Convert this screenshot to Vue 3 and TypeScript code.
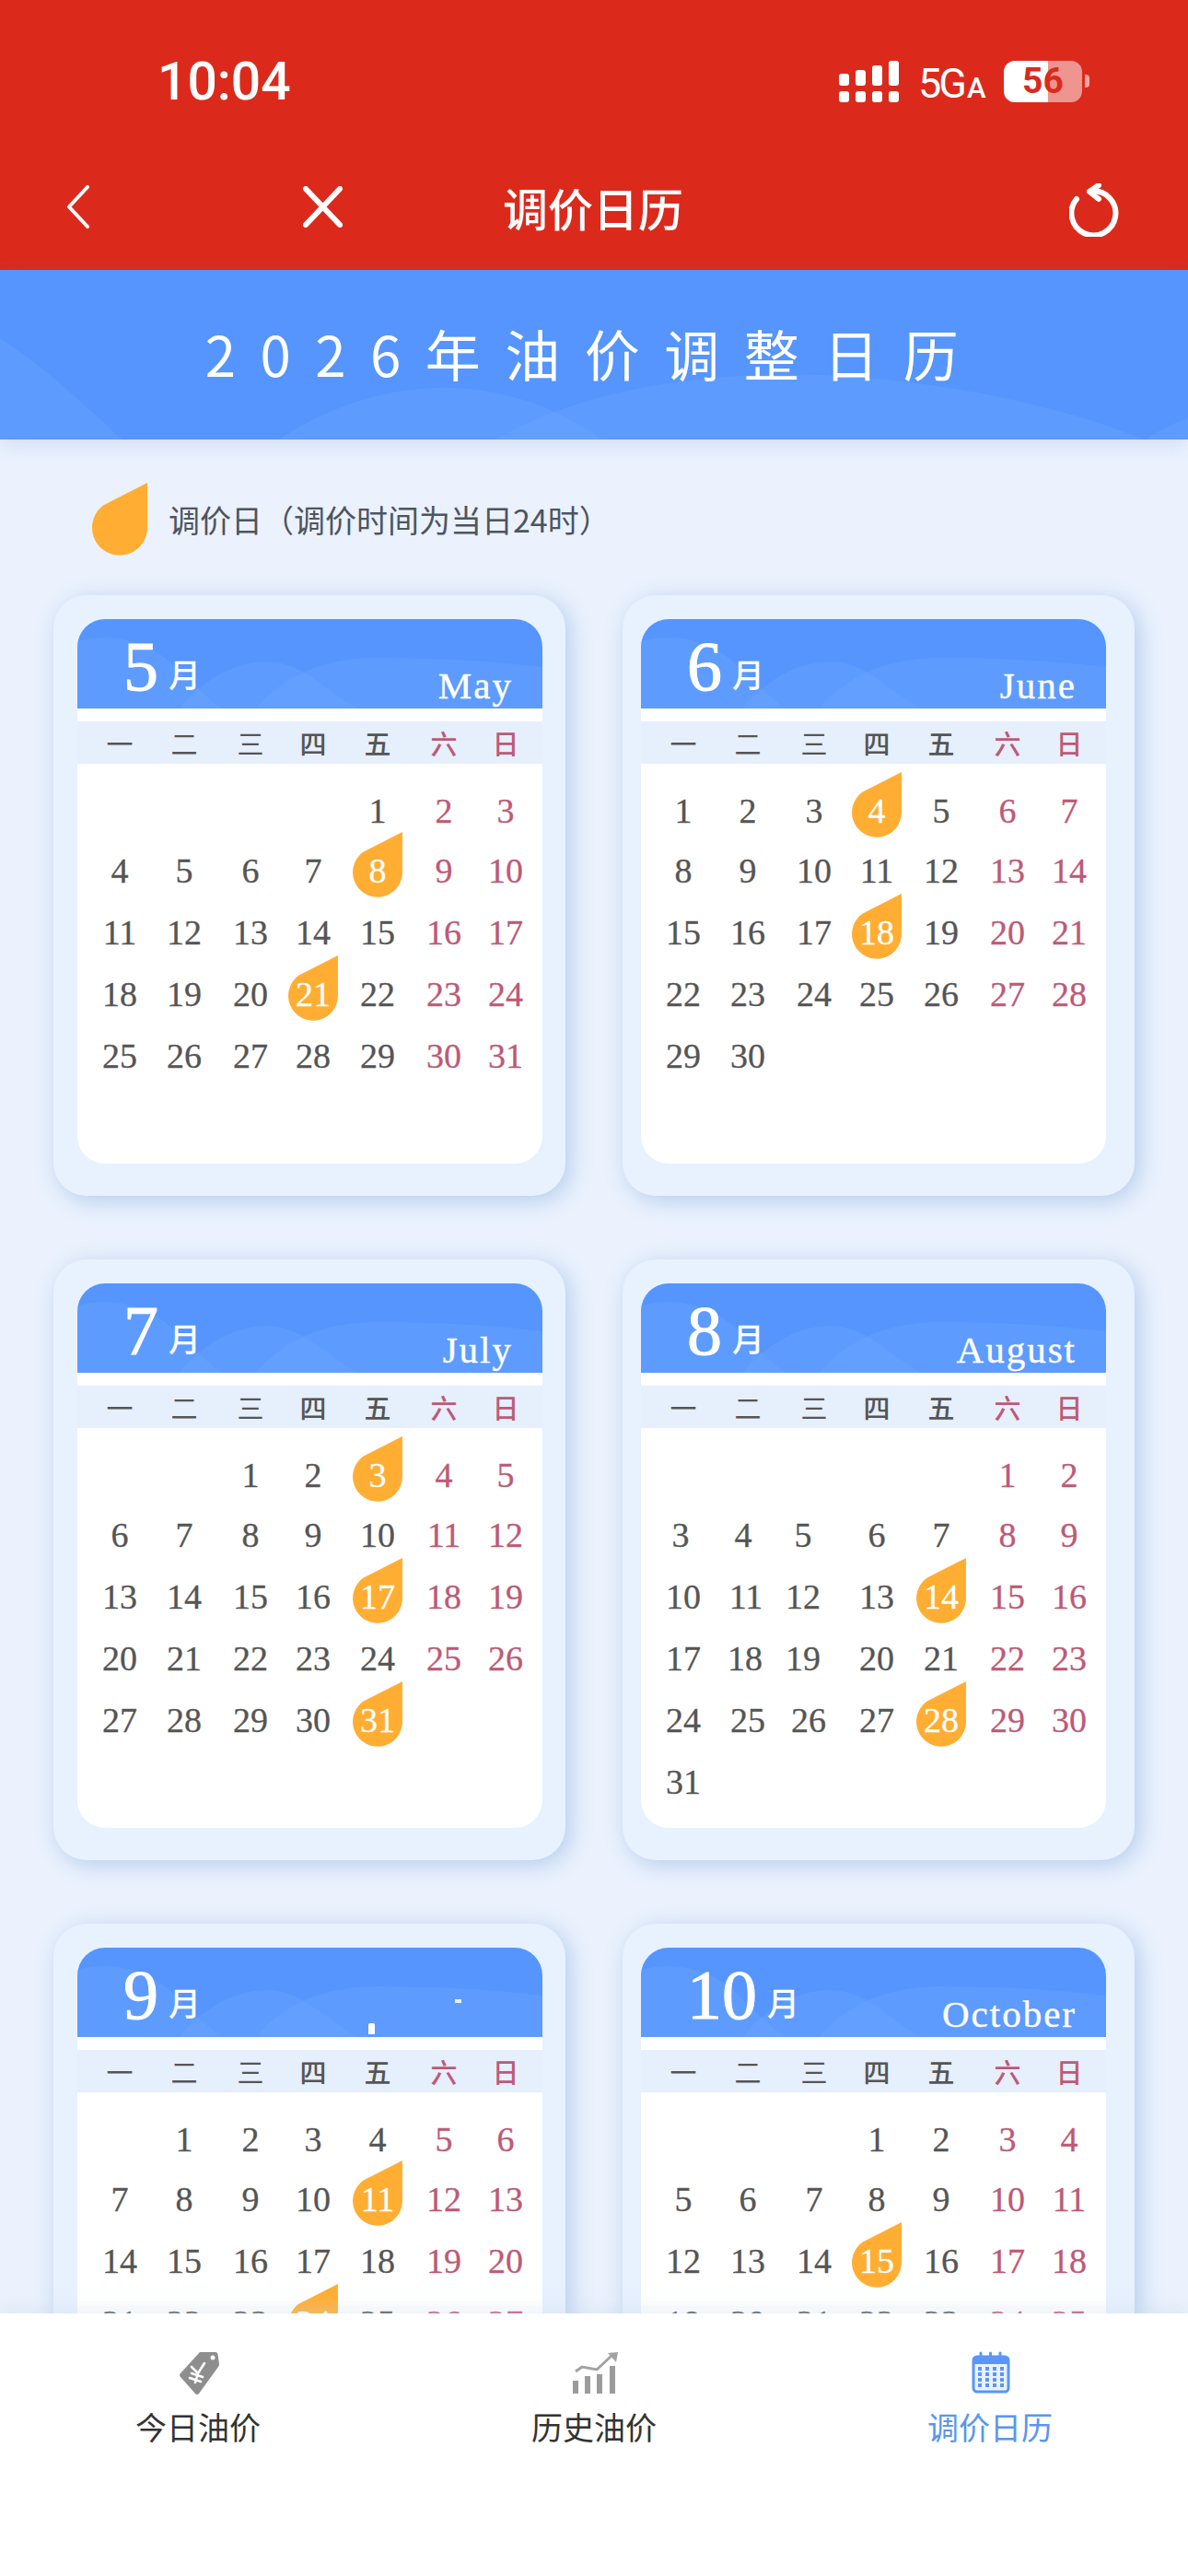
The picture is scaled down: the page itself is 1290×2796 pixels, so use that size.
<script setup lang="ts">
interface Month {
  num: number
  en: string
  first: number
  days: number
  marks: number[]
  ghost?: boolean
  nudge?: Record<number, number>
}

const months: Month[] = [
  { num: 5, en: 'May', first: 4, days: 31, marks: [8, 21] },
  { num: 6, en: 'June', first: 0, days: 30, marks: [4, 18] },
  { num: 7, en: 'July', first: 2, days: 31, marks: [3, 17, 31] },
  { num: 8, en: 'August', first: 5, days: 31, marks: [14, 28], nudge: { 3: -3, 4: -5, 5: -12, 11: -2, 12: -12, 18: -3, 19: -12, 26: -6 } },
  { num: 9, en: '', first: 1, days: 30, marks: [11, 24], ghost: true },
  { num: 10, en: 'October', first: 3, days: 31, marks: [15, 29] }
]

const week = ['一', '二', '三', '四', '五', '六', '日']

function cells(m: Month): (number | null)[] {
  const out: (number | null)[] = Array(m.first).fill(null)
  for (let d = 1; d <= m.days; d++) out.push(d)
  return out
}

function shift(m: Month, d: number | null) {
  const dx = d !== null ? m.nudge?.[d] : undefined
  return dx ? { left: `${dx}px` } : undefined
}
</script>

<template>
  <div class="app">
    <header class="top">
      <div class="status">
        <span class="time">10:04</span>
        <div class="status-right">
          <svg class="signal" width="65" height="45" viewBox="0 0 65 45" fill="#fff">
            <rect x="0" y="14" width="11" height="13" rx="3" />
            <rect x="18" y="10" width="11" height="17" rx="3" />
            <rect x="36" y="5" width="11" height="22" rx="3" />
            <rect x="54" y="0" width="11" height="27" rx="3" />
            <rect x="0" y="33" width="11" height="12" rx="3" />
            <rect x="18" y="33" width="11" height="12" rx="3" />
            <rect x="36" y="33" width="11" height="12" rx="3" />
            <rect x="54" y="33" width="11" height="12" rx="3" />
          </svg>
          <span class="net">5G<small>A</small></span>
          <div class="battery"><span>56</span></div>
          <i class="nub"></i>
        </div>
      </div>
      <nav class="nav">
        <div class="nav-left">
          <svg width="25" height="47" viewBox="0 0 25 47" fill="none" stroke="#fff" stroke-width="4" stroke-linecap="round" stroke-linejoin="round">
            <path d="M23 2 L3 23.5 L23 45" />
          </svg>
          <svg width="43" height="45" viewBox="0 0 43 45" fill="none" stroke="#fff" stroke-width="6" stroke-linecap="round">
            <path d="M3 3 L40 42 M40 3 L3 42" />
          </svg>
        </div>
        <div class="nav-title">调价日历</div>
        <div class="nav-right">
          <svg width="55" height="58" viewBox="0 0 55 58" fill="none" stroke="#fff" stroke-width="6" stroke-linecap="round" stroke-linejoin="round">
            <path d="M24 8.500 A24 24 0 1 1 8 17" />
            <path d="M32 2 L22 9 L32 17" />
          </svg>
        </div>
      </nav>
    </header>

    <section class="banner">
      <svg class="banner-waves" viewBox="0 0 1290 183" preserveAspectRatio="none">
        <path d="M0 74 C50 105 95 150 133 183 L0 183 Z" />
        <path d="M303 183 C360 145 425 126 485 127 C550 128 610 150 652 183 Z" />
        <path d="M538 183 C620 135 740 112 863 113 C1000 114 1150 145 1242 183 Z" />
        <path d="M1245 183 C1260 172 1275 165 1290 160 L1290 183 Z" />
      </svg>
      <h1 class="banner-title">2026年油价调整日历</h1>
    </section>

    <main class="main">
      <div class="legend">
        <svg class="legend-drop" viewBox="0 0 60 79">
          <path d="M60 0 V49 A30 30 0 1 1 13 24 Z" />
        </svg>
        <span>调价日（调价时间为当日24时）</span>
      </div>

      <div class="cards">
        <article v-for="m in months" :key="m.num" class="card">
          <div class="sheet">
            <div class="head">
              <svg class="head-waves" viewBox="0 0 506 97" preserveAspectRatio="none">
                <path d="M0 24 C35 14 75 22 105 50 C120 66 135 80 157 97 L0 97 Z" />
                <path d="M110 97 C140 62 175 46 205 46 C245 46 265 75 305 97 Z" />
                <path d="M194 97 C225 60 270 42 325 42 C385 42 450 45 506 52 L506 97 Z" />
              </svg>
              <div class="mon">{{ m.num }}<span class="mon-cn">月</span></div>
              <div class="mon-en">{{ m.en }}</div>
              <template v-if="m.ghost">
                <i class="ghost-a"></i>
                <i class="ghost-b"></i>
              </template>
            </div>
            <div class="week">
              <span v-for="(w, i) in week" :key="w" :class="{ off: i > 4, strong: i === 3 || i === 4 }">{{ w }}</span>
            </div>
            <div class="days">
              <span
                v-for="(d, i) in cells(m)"
                :key="i"
                class="day"
                :class="{ off: i % 7 > 4, hot: d !== null && m.marks.includes(d) }"
              >
                <svg v-if="d !== null && m.marks.includes(d)" class="drop" viewBox="0 0 60 79">
                  <path d="M60 0 V49 A30 30 0 1 1 13 24 Z" />
                </svg>
                <b :style="shift(m, d)">{{ d ?? '' }}</b>
              </span>
            </div>
          </div>
        </article>
      </div>
    </main>

    <footer class="tabs">
      <div class="tab">
        <svg class="tab-icon" width="70" height="48" viewBox="0 13 70 48">
          <path d="M37 14 H54 Q56 14 56.500 16 L58 27 Q58 29 57 30 L36 59 Q34 61 32 59 L16 41 Q14 39 16 37 Z" fill="#8e8e8e" />
          <circle cx="51" cy="20" r="2.500" fill="#fff" />
          <path d="M28 30 L35 37 L42 26 M35 37 L32 47 M28 37 L40 41 M26 42 L38 46" fill="none" stroke="#fff" stroke-width="2.600" stroke-linecap="round" />
        </svg>
        <span>今日油价</span>
      </div>
      <div class="tab">
        <svg class="tab-icon" width="70" height="48" viewBox="0 13 70 48">
          <g fill="#9b9b9b">
            <rect x="12" y="45" width="6" height="14" />
            <rect x="25" y="40" width="6" height="19" />
            <rect x="38" y="38" width="6" height="21" />
            <rect x="52" y="29" width="6" height="30" />
          </g>
          <path d="M15 35 L22 30 L38 33 L54 18" fill="none" stroke="#a3a3a3" stroke-width="3" />
          <path d="M50 15 L61 14 L59 25 Z" fill="#a3a3a3" />
        </svg>
        <span>历史油价</span>
      </div>
      <div class="tab active">
        <svg class="tab-icon" width="70" height="48" viewBox="0 13 70 48">
          <rect x="17" y="19" width="38" height="38" rx="4" fill="#e9f1ff" stroke="#5a96f4" stroke-width="3" />
          <rect x="17" y="19" width="38" height="8" fill="#5a96f4" />
          <g fill="none" stroke="#5a96f4" stroke-width="3" stroke-linecap="round">
            <path d="M25 15 V23 M35.500 15 V23 M46 15 V23" />
          </g>
          <g fill="#5a96f4">
            <template v-for="y in [30, 36, 42, 48]" :key="y">
              <rect v-for="x in [22, 30, 38, 46]" :key="x" :x="x" :y="y" width="4" height="4" />
            </template>
          </g>
        </svg>
        <span>调价日历</span>
      </div>
    </footer>
  </div>
</template>

<style>
html,
body {
  margin: 0;
  background: #ebf2fd;
}
</style>

<style scoped>
.app {
  width: 1290px;
  height: 2796px;
  display: flex;
  flex-direction: column;
  overflow: hidden;
  background: #ebf2fd;
  font-family: 'Noto Sans CJK SC', 'Noto Sans', sans-serif;
}

.top {
  height: 293px;
  flex: none;
  background: #db2a1c;
  color: #fff;
}

.status {
  height: 176px;
  display: flex;
  align-items: center;
  justify-content: space-between;
  padding: 0 107px 0 171px;
}

.time {
  font: 500 57px/1 Roboto, sans-serif;
}

.status-right {
  display: flex;
  align-items: center;
}

.signal {
  display: block;
  margin-right: 21px;
}

.net {
  font: 400 45px/1 Roboto, sans-serif;
  letter-spacing: -3px;
  width: 93px;
  margin-top: 4px;
}

.net small {
  font-size: 31px;
  font-weight: 500;
  margin-left: 3px;
  letter-spacing: 0;
}

.battery {
  width: 85px;
  height: 45px;
  border-radius: 12px;
  background: linear-gradient(to right, #fff 56.500%, rgba(255, 255, 255, 0.5) 56.500%);
  display: flex;
  align-items: center;
  justify-content: center;
  color: #db2a1c;
  font: 700 39px/1 Roboto, sans-serif;
}

.nub {
  width: 5px;
  height: 14px;
  margin-left: 3px;
  border-radius: 0 4px 4px 0;
  background: rgba(255, 255, 255, 0.6);
}

.nav {
  height: 96px;
  display: grid;
  grid-template-columns: 1fr auto 1fr;
  align-items: center;
  padding: 0 74px 0 72px;
}

.nav-left {
  display: flex;
  align-items: center;
  gap: 232px;
}

.nav-title {
  font-size: 49px;
  font-weight: 500;
  line-height: 1;
}

.nav-right {
  display: flex;
  justify-content: flex-end;
  padding-top: 8px;
}

.banner {
  height: 184px;
  flex: none;
  position: relative;
  background: #5595fd;
  box-shadow: 0 6px 22px rgba(80, 120, 200, 0.16);
  display: flex;
  align-items: center;
  justify-content: center;
  padding-bottom: 5px;
  box-sizing: border-box;
  z-index: 1;
}

.banner-waves {
  position: absolute;
  inset: 0;
  width: 100%;
  height: 100%;
}

.banner-waves path {
  fill: #6ba6ff;
  opacity: 0.38;
}

.banner-title {
  position: relative;
  margin: 0;
  color: #fff;
  font-size: 60px;
  font-weight: 400;
  letter-spacing: 26.500px;
  line-height: 1;
}

.main {
  flex: 1;
  min-height: 0;
  overflow: hidden;
  padding: 47px 0 0 58px;
}

.legend {
  display: flex;
  align-items: center;
  gap: 23px;
  padding-left: 42px;
  height: 79px;
  margin-bottom: 43px;
  color: #4d5560;
  font-size: 34px;
}

.legend-drop {
  width: 60px;
  height: 79px;
  flex: none;
}

.legend-drop path,
.drop path {
  fill: #ffae33;
}

.cards {
  display: grid;
  grid-template-columns: 556px 556px;
  column-gap: 62px;
  row-gap: 69px;
}

.card {
  height: 652px;
  box-sizing: border-box;
  padding: 26px 25px 35px 26px;
  border-radius: 36px;
  background: #e8f1fe;
  box-shadow: 5px 5px 26px #b3ccec;
}

.card:nth-child(even) {
  padding: 26px 31px 35px 20px;
}

.sheet {
  height: 591px;
  background: #fff;
  border-radius: 30px;
  overflow: hidden;
}

.head {
  height: 97px;
  position: relative;
  background: #5595fd;
  display: flex;
  justify-content: space-between;
  align-items: flex-start;
  padding: 0 32px 0 50px;
  color: #fff;
  font-family: 'Liberation Serif', serif;
}

.head-waves {
  position: absolute;
  inset: 0;
  width: 100%;
  height: 100%;
}

.head-waves path {
  fill: #6ba6ff;
  opacity: 0.38;
}

.mon,
.mon-en {
  position: relative;
  line-height: 1;
}

.mon {
  font-size: 76px;
  margin-top: 13px;
  -webkit-text-stroke: 1px #fff;
}

.mon-cn {
  position: relative;
  top: -3px;
  font-family: 'Noto Sans CJK SC', sans-serif;
  font-size: 35px;
  font-weight: 500;
  margin-left: 11px;
  -webkit-text-stroke: 0;
}

.mon-en {
  font-size: 41px;
  margin-top: 52px;
  letter-spacing: 2px;
  -webkit-text-stroke: 0.4px #fff;
}

.ghost-a,
.ghost-b {
  position: absolute;
  background: #fff;
}

.ghost-a {
  left: 316px;
  top: 82px;
  width: 7px;
  height: 12px;
  border-radius: 2px 2px 0 0;
}

.ghost-b {
  left: 410px;
  top: 56px;
  width: 7px;
  height: 4px;
  opacity: 0.85;
}

.week,
.days {
  display: grid;
  grid-template-columns: 70px 70px 74px 62px 78px 66px 68px;
  padding-left: 11px;
  text-align: center;
}

.week {
  margin-top: 14px;
  height: 46px;
  align-items: center;
  background: #e6effc;
  color: #555;
  font-size: 29px;
  line-height: 46px;
}

.week .strong,
.week .off {
  font-weight: 500;
}

.off {
  color: #bd5a76;
}

.days {
  padding-top: 19px;
  grid-template-rows: 64px 66px 68px 66px 68px 66px;
  font-family: 'Liberation Serif', serif;
  font-size: 38px;
  color: #555;
}

.day {
  position: relative;
  display: flex;
  align-items: center;
  justify-content: center;
}

.day.off {
  color: #bd5a76;
}

.day b {
  position: relative;
  font-weight: 400;
  line-height: 1;
  -webkit-text-stroke: 0.3px currentColor;
}

.day.hot b {
  color: #fff;
}

.drop {
  position: absolute;
  left: 50%;
  top: 50%;
  width: 54px;
  height: 71px;
  margin-left: -27px;
  margin-top: -42px;
}

.tabs {
  height: 285px;
  flex: none;
  position: relative;
  background: #fff;
  display: grid;
  grid-template-columns: repeat(3, 430px);
  box-shadow: 0 -6px 18px rgba(200, 215, 235, 0.35);
}

.tab {
  display: flex;
  flex-direction: column;
  align-items: center;
  padding-top: 41px;
  color: #333;
  font-size: 34px;
  line-height: 34px;
}

.tab-icon {
  display: block;
  margin-bottom: 17px;
}

.tab.active {
  color: #5a96ee;
}
</style>
